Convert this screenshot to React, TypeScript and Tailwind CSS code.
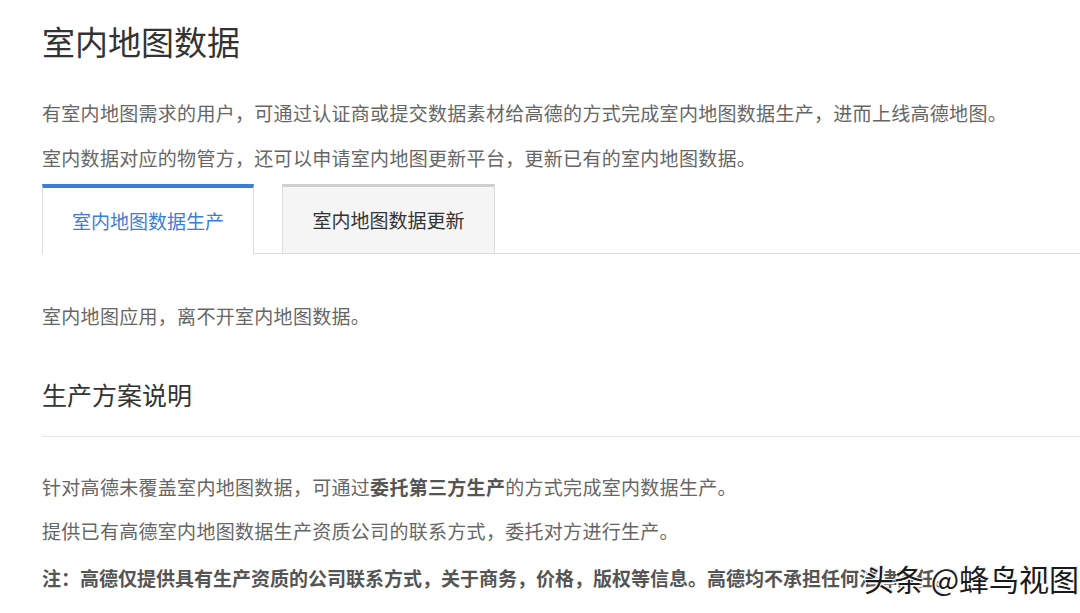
import React from 'react';

const tabs = ['室内地图数据生产', '室内地图数据更新'];

export default function App() {
  return (
    <div className="relative min-h-screen bg-white overflow-hidden font-['Noto_Sans_CJK_SC','Noto_Sans',sans-serif]">
      <div className="pl-[42px]">
        {/* Header */}
        <h1 className="mt-[19px] text-[33px] leading-[44px] text-[#333]">室内地图数据</h1>
        <p className="mt-[27px] text-[19px] leading-[45px] tracking-[0.3px] text-[#666] whitespace-nowrap">
          有室内地图需求的用户，可通过认证商或提交数据素材给高德的方式完成室内地图数据生产，进而上线高德地图。
        </p>
        <p className="text-[19px] leading-[45px] tracking-[0.3px] text-[#666] whitespace-nowrap">
          室内数据对应的物管方，还可以申请室内地图更新平台，更新已有的室内地图数据。
        </p>

        {/* Tabs */}
        <div className="mt-[4px] flex h-[70px]">
          <div className="w-[212px] flex items-center justify-center border-t-[4px] border-t-[#3b7dd8] border-x border-x-[#dcdcdc] bg-white text-[19px] text-[#3b7dd8]">
            {tabs[0]}
          </div>
          <div className="w-[28px] border-b border-[#dcdcdc]" />
          <div className="w-[213px] flex items-center justify-center border-t-[3px] border-t-[#cfcfcf] border-x border-x-[#dcdcdc] border-b border-b-[#dcdcdc] bg-[#f5f5f5] text-[19px] text-[#333]">
            {tabs[1]}
          </div>
          <div className="flex-1 border-b border-[#dcdcdc]" />
        </div>

        <p className="mt-[40px] text-[19px] leading-[44px] tracking-[0.3px] text-[#666]">室内地图应用，离不开室内地图数据。</p>

        {/* Section */}
        <h2 className="mt-[34px] text-[25px] leading-[44px] text-[#333]">生产方案说明</h2>
        <div className="mt-[20px] border-t border-[#e6e6e6]" />

        <p className="mt-[28px] text-[19px] leading-[44px] tracking-[0.3px] text-[#666] whitespace-nowrap">
          针对高德未覆盖室内地图数据，可通过<span className="font-bold text-[#555]">委托第三方生产</span>的方式完成室内数据生产。
        </p>
        <p className="text-[19px] leading-[44px] tracking-[0.3px] text-[#666] whitespace-nowrap">
          提供已有高德室内地图数据生产资质公司的联系方式，委托对方进行生产。
        </p>
        <p className="mt-[3px] text-[19px] leading-[44px] font-bold text-[#555] whitespace-nowrap">
          注：高德仅提供具有生产资质的公司联系方式，关于商务，价格，版权等信息。高德均不承担任何法律责任。
        </p>
      </div>

      {/* watermark */}
      <div className="absolute left-[864px] top-[558px] text-[30px] leading-[40px] text-[#1a1a1a] whitespace-nowrap [text-shadow:2px_2px_0_#fff,-1px_-1px_0_#fff,1px_-1px_0_#ddd]">
        头条 @蜂鸟视图
      </div>
    </div>
  );
}
